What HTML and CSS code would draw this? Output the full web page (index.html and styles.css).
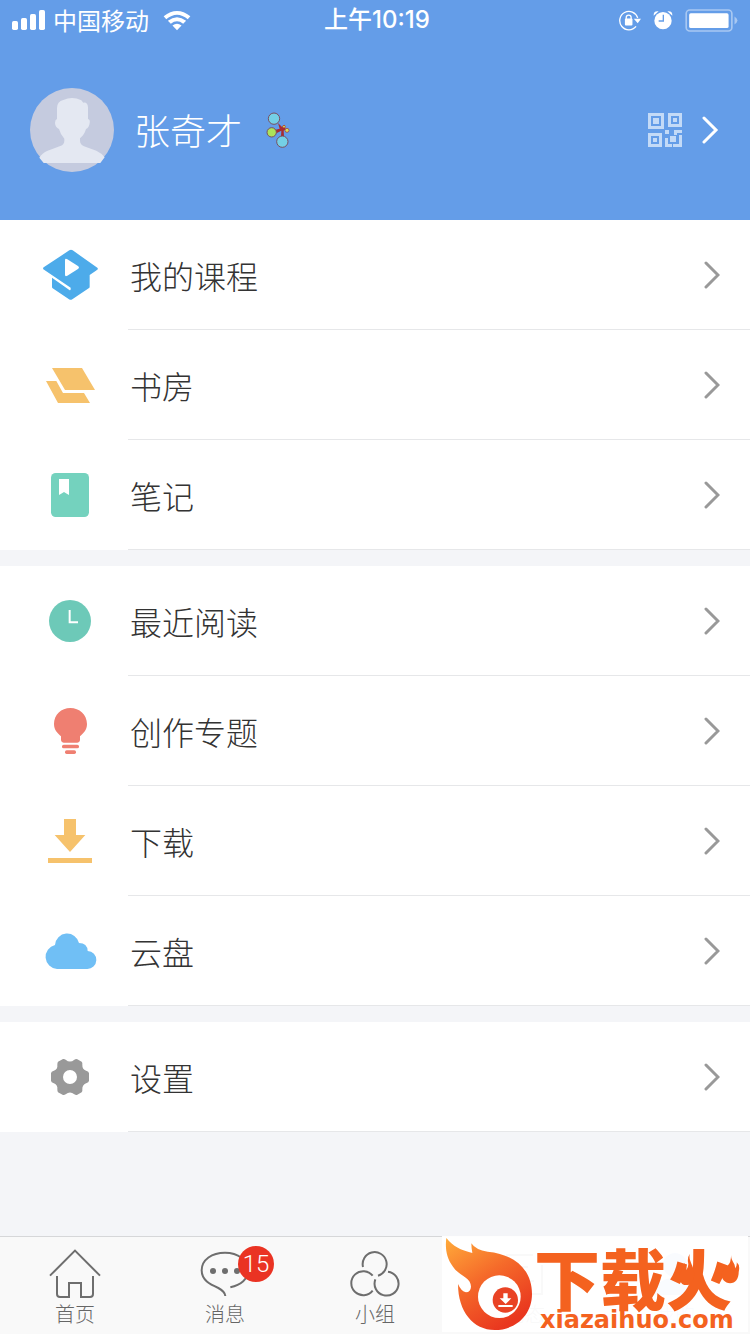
FILE: index.html
```html
<!DOCTYPE html>
<html lang="zh-CN">
<head>
<meta charset="utf-8">
<meta name="viewport" content="width=device-width, initial-scale=1">
<title>张奇才</title>
<link rel="stylesheet" href="styles.css">
</head>
<body>
<header class="header">
  <div class="status">
    <div class="status-left">
      <svg class="signal" viewBox="36 30 99 60" aria-hidden="true"><rect x="36" y="63" width="18" height="27" rx="5"/><rect x="63" y="54" width="18" height="36" rx="5"/><rect x="90" y="42" width="18" height="48" rx="5"/><rect x="117" y="30" width="18" height="60" rx="5"/></svg>
      <span>中国移动</span>
      <svg class="wifi" viewBox="488 28 86 64" aria-hidden="true"><path d="M490 47Q531 14 572 47L564 56Q531 28 498 56Z"/><path d="M503 61Q531 39 559 61L550 70Q531 55 512 70Z"/><path d="M517 75Q531 65 545 75L531 90Z"/></svg>
    </div>
    <time class="time">上午10:19</time>
    <div class="status-right">
      <svg class="lock" viewBox="55 28 70 64" aria-hidden="true"><path d="M110 78A28 28 0 1 1 115 52" fill="none" stroke="#fff" stroke-width="4"/><path d="M103 55h22l-10 13z"/><rect x="76" y="54" width="23" height="21" rx="3"/><path d="M80 56v-5a7.500 7.500 0 0 1 15 0v5" fill="none" stroke="#fff" stroke-width="4"/></svg>
      <svg class="alarm" viewBox="163 30 60 60" aria-hidden="true"><circle cx="193" cy="62" r="26"/><path d="M165 47q-1-15 15-13zM221 47q1-15-15-13z"/><path d="M194 44v19h-14" fill="none" stroke="#649de8" stroke-width="4"/></svg>
      <svg class="battery" viewBox="258 26 160 70" aria-hidden="true"><rect x="261" y="29" width="139" height="64" rx="11" fill="none" stroke="#a8c8f2" stroke-width="5"/><rect x="270" y="39" width="120" height="45" rx="5"/><path d="M408 49q18 12 0 24z" fill="#a8c8f2"/></svg>
    </div>
  </div>
  <a class="profile" href="#profile">
    <svg class="avatar" viewBox="30 24 252 252" aria-hidden="true"><circle cx="156" cy="150" r="126" fill="#c5cbdf"/><path d="M58 233Q66 219 83 212L121 198Q133 193 133 182V176Q122 165 117 147Q106 143 105 129Q105 119 111 117V84Q111 65 130 60Q157 47 184 61L190 68Q203 66 204 82V117Q211 119 209 129Q207 144 198 147Q193 165 180 175V182Q180 193 192 199L229 212Q246 220 254 232L241 249H71Z" fill="#e4e8f2"/></svg>
    <span class="name">张奇才</span>
    <svg class="medal" viewBox="738 96 72 114" aria-hidden="true"><path d="M774 132L786 144 793 137 797 151 791 155 792 172H783L784 155 766 164 764 153 779 149Z" fill="#a92b31"/><g stroke="#79505f" stroke-width="3"><circle cx="762" cy="119" r="17" fill="#74d0e6"/><circle cx="755" cy="160" r="14" fill="#ace35a"/><circle cx="787" cy="188" r="17" fill="#74d0e6"/></g><g fill="#d4e45a" stroke="#a92b31" stroke-width="2"><circle cx="801" cy="154" r="6"/><circle cx="792" cy="143" r="4"/></g></svg>
    <svg class="qr" viewBox="54 54 102 102" aria-hidden="true"><g fill="none" stroke="#c3daf7" stroke-width="9"><path d="M58.500 58.500h39v39h-39zM118.500 58.500h33v33h-33zM58.500 118.500h33v33h-33z"/></g><path fill="#c3daf7" d="M69 69h18v18H69zM129 69h12v12h-12zM69 129h12v12H69zM105 105h12v12h-12zM132 105h24v9h-15v6h-9zM120 123h18v18h-18zM105 129h9v18h12v9h-21zM147 120h9v36h-27v-9h18z"/></svg>
    <svg class="chevron chevron-light" viewBox="0 0 18 30" aria-hidden="true"><path d="M2 3L14 15 2 27"/></svg>
  </a>
</header>

<main class="menu">
  <section class="group">
    <a class="row" href="#courses">
      <svg class="icon" viewBox="36 36 168 168" aria-hidden="true"><path d="M118 46Q123 43 128 46L202 98Q205 101 202 104L179 120V155Q179 158 176 160L127 193Q122 196 117 193L68 160Q66 158 66 155V128L118 165Q122 167 122 162V158L40 103Q38 100 41 97Z" fill="#4dabea"/><path d="M105 76Q105 69 112 73L145 94Q149 98 145 101L112 122Q105 126 105 119Z" fill="#fff"/></svg>
      <span class="label">我的课程<svg class="chevron" viewBox="0 0 18 30" aria-hidden="true"><path d="M4 3L16 15 4 27"/></svg></span>
    </a>
    <a class="row" href="#library">
      <svg class="icon" viewBox="36 366 168 168" aria-hidden="true"><path d="M66 399H156L195 465H105ZM48 438H79L99 474H162L180 504H84Z" fill="#f6c26c"/></svg>
      <span class="label">书房<svg class="chevron" viewBox="0 0 18 30" aria-hidden="true"><path d="M4 3L16 15 4 27"/></svg></span>
    </a>
    <a class="row" href="#notes">
      <svg class="icon" viewBox="36 21 168 168" aria-hidden="true"><rect x="63" y="39" width="114" height="132" rx="14" fill="#74d2be"/><path d="M87 57h30v48q-8-5-15-9-7 4-15 9z" fill="#fff"/></svg>
      <span class="label">笔记<svg class="chevron" viewBox="0 0 18 30" aria-hidden="true"><path d="M4 3L16 15 4 27"/></svg></span>
    </a>
  </section>
  <section class="group">
    <a class="row" href="#recent">
      <svg class="icon" viewBox="36 399 168 168" aria-hidden="true"><circle cx="120" cy="483" r="63" fill="#6dc9b8"/><path d="M119 450v37h25" fill="none" stroke="#fff" stroke-width="6"/></svg>
      <span class="label">最近阅读<svg class="chevron" viewBox="0 0 18 30" aria-hidden="true"><path d="M4 3L16 15 4 27"/></svg></span>
    </a>
    <a class="row" href="#topics">
      <svg class="icon" viewBox="36 24 168 168" aria-hidden="true"><g fill="#ef7f71"><path d="M93 136V124C84 115 72 106 72 87C72 59 94 39 121 39S171 59 171 87C171 106 159 115 150 124V136Q149 143 142 143H101Q94 143 93 136Z"/><rect x="96" y="149" width="51" height="11" rx="5"/><rect x="105" y="166" width="33" height="11" rx="5"/></g></svg>
      <span class="label">创作专题<svg class="chevron" viewBox="0 0 18 30" aria-hidden="true"><path d="M4 3L16 15 4 27"/></svg></span>
    </a>
    <a class="row" href="#downloads">
      <svg class="icon" viewBox="36 354 168 168" aria-hidden="true"><path d="M102 372H138V420H166L120 471 74 420H102ZM54 489H186V504H54Z" fill="#f6c26c"/></svg>
      <span class="label">下载<svg class="chevron" viewBox="0 0 18 30" aria-hidden="true"><path d="M4 3L16 15 4 27"/></svg></span>
    </a>
    <a class="row" href="#cloud">
      <svg class="icon" viewBox="36 9 168 168" aria-hidden="true"><path d="M81 147A36.500 36.500 0 0 1 75 75A36.500 36.500 0 0 1 147 69Q172 69 173 93A27 27 0 0 1 171 147Z" fill="#70bff5"/></svg>
      <span class="label">云盘<svg class="chevron" viewBox="0 0 18 30" aria-hidden="true"><path d="M4 3L16 15 4 27"/></svg></span>
    </a>
  </section>
  <section class="group">
    <a class="row" href="#settings">
      <svg class="icon" viewBox="36 387 168 168" aria-hidden="true"><path fill="#999" fill-rule="evenodd" d="M99 417Q103 416 107 419Q120 430 133 419Q138 416 142 418L155 425Q158 428 157 434Q156 448 170 453Q176 454 177 460V482Q176 488 170 489Q156 494 157 508Q158 514 155 517L142 524Q138 526 133 523Q120 512 107 523Q103 526 99 525L84 517Q82 514 82 508Q84 494 70 489Q64 488 63 482V460Q64 454 70 453Q84 448 82 434Q82 428 84 425ZM120 450A21 21 0 1 0 120 492A21 21 0 1 0 120 450Z"/></svg>
      <span class="label">设置<svg class="chevron" viewBox="0 0 18 30" aria-hidden="true"><path d="M4 3L16 15 4 27"/></svg></span>
    </a>
  </section>
</main>

<nav class="tabs">
  <a class="tab" href="#home">
    <svg class="tab-icon" viewBox="147 72 156 156" aria-hidden="true"><path d="M150 152L225 77 300 152M171 153V207Q171 216 180 216H207V174H243V216H270Q279 216 279 207V153"/></svg>
    <span>首页</span>
  </a>
  <a class="tab" href="#messages">
    <span class="tab-mark">
      <svg class="tab-icon" viewBox="597 72 156 156" aria-hidden="true"><path d="M676 213Q675 200 655 189C630 178 605 166 605 136C605 104 636 83 675 83S745 106 745 136C745 162 722 180 691 187"/><g class="dots"><circle cx="639" cy="138" r="9"/><circle cx="675" cy="138" r="9"/><circle cx="711" cy="138" r="9"/></g></svg>
      <span class="count">15</span>
    </span>
    <span>消息</span>
  </a>
  <a class="tab" href="#groups">
    <svg class="tab-icon" viewBox="1047 72 156 156" aria-hidden="true"><path d="M1089 126A36 36 0 1 1 1134 152M1118 152A36 36 0 1 0 1118 197M1126 163A36 36 0 1 0 1164 140"/></svg>
    <span>小组</span>
  </a>
  <a class="tab" href="#moments">
    <svg class="tab-icon" viewBox="0 0 52 52" aria-hidden="true"><path d="M34 6H8V45H43V16M17 18h12M17 32h18" stroke-width="2"/></svg>
    <span>动态</span>
  </a>
  <a class="tab tab-current" href="#me">
    <svg class="tab-icon" viewBox="0 0 52 52" aria-hidden="true"><circle cx="26" cy="16" r="12"/><path d="M5 46Q6 29 26 29T47 46Z"/></svg>
    <span>我的</span>
  </a>
  <div class="brand">
    <svg class="flame" viewBox="36 33 276 288" aria-hidden="true">
      <defs><linearGradient id="fire" x1="0" y1="0" x2="0.600" y2="1"><stop offset="0" stop-color="#ffab3a"/><stop offset="0.500" stop-color="#f56a2a"/><stop offset="1" stop-color="#e9371f"/></linearGradient></defs>
      <path fill="url(#fire)" d="M49 39C70 65 91 75 127 84Q124 68 124 55Q137 75 173 80C258 88 306 137 306 207C306 270 258 315 194 315C130 315 84 260 84 177Q94 200 108 202Q122 201 123 185C123 157 88 154 69 125C49 98 45 69 49 39Z"/>
      <circle cx="208" cy="215" r="64" fill="#fff"/>
      <circle cx="226" cy="225" r="38" fill="#e94325"/>
      <path fill="#fff" d="M220 205h13v15h11l-17 17-18-17h11zM205 240h43v6h-43z"/>
    </svg>
    <div class="brand-text">
      <strong class="brand-name">下载火</strong>
      <span class="brand-site">xiazaihuo.com</span>
    </div>
    <svg class="sparks" viewBox="745 80 195 100" aria-hidden="true"><path d="M780 85C774 108 794 122 793 149C792 170 780 182 767 181C753 180 745 162 751 144C755 134 763 127 762 113Q772 119 769 135Q778 124 774 109Q773 94 780 85ZM905 86C903 108 918 112 917 130Q923 124 922 111Q933 120 928 140C928 162 918 175 902 175C885 174 875 160 876 147C878 129 896 125 902 110Q905 99 905 86Z"/></svg>
  </div>
</nav>
</body>
</html>
```
FILE: styles.css
```css
* {
  box-sizing: border-box;
}

body {
  margin: 0;
  min-height: 100vh;
  display: flex;
  flex-direction: column;
  background: #f4f5f8;
  color: #333;
  font-family: "Noto Sans CJK SC", sans-serif;
  font-weight: 300;
}

a {
  color: inherit;
  text-decoration: none;
}

svg {
  display: block;
  flex: none;
}

.header {
  background: #649de8;
  color: #fff;
}

.status {
  display: grid;
  grid-template-columns: 1fr auto 1fr;
  align-items: center;
  height: 40px;
  padding: 0 12px;
  font-size: 24px;
  line-height: 40px;
  fill: #fff;
}

.status-left,
.status-right {
  display: flex;
  align-items: center;
}

.status-left {
  gap: 8px;
  font-weight: 400;
}

.status-right {
  justify-content: flex-end;
  gap: 12px;
}

.signal {
  width: 33px;
  height: 20px;
}

.wifi {
  width: 28px;
  height: 21px;
  margin-left: 6px;
}

.time {
  padding-left: 4px;
  font-family: Inter, "Noto Sans CJK SC", sans-serif;
  font-weight: 500;
}

.lock {
  width: 23px;
  height: 21px;
}

.alarm {
  width: 20px;
  height: 20px;
}

.battery {
  width: 53px;
  height: 23px;
}

.profile {
  display: flex;
  align-items: center;
  height: 180px;
  padding: 0 30px;
}

.avatar {
  width: 84px;
  height: 84px;
}

.name {
  margin: 0 24px 0 20px;
  padding-bottom: 2px;
  font-size: 36px;
}

.medal {
  width: 24px;
  height: 38px;
}

.qr {
  width: 34px;
  height: 34px;
  margin: 0 20px 0 auto;
}

.chevron {
  width: 18px;
  height: 30px;
  fill: none;
  stroke: #999;
  stroke-width: 3;
  stroke-linecap: round;
}

.chevron-light {
  stroke: #fff;
}

.menu {
  flex: 1;
  display: flex;
  flex-direction: column;
  gap: 16px;
}

.group {
  background: #fff;
}

.row {
  display: flex;
  align-items: center;
  gap: 30px;
  height: 110px;
  padding-left: 42px;
}

.icon {
  width: 56px;
  height: 56px;
}

.label {
  flex: 1;
  display: flex;
  align-items: center;
  justify-content: space-between;
  height: 110px;
  padding: 0 30px 0 2px;
  border-bottom: 1px solid #e6e7e9;
  font-size: 32px;
}

.tabs {
  position: relative;
  display: flex;
  border-top: 1px solid #d6d7d9;
  background: #f9f9f9;
}

.tab {
  flex: 1;
  display: flex;
  flex-direction: column;
  align-items: center;
  gap: 1px;
  padding: 12px 0 8px;
  color: #666;
  font-size: 20px;
  line-height: 24px;
}

.tab-icon {
  width: 52px;
  height: 52px;
  fill: none;
  stroke: #6e6e6e;
  stroke-width: 6;
}

.tab-current {
  color: #649de8;
}

.tab-current .tab-icon {
  fill: #649de8;
  stroke: none;
}

.dots {
  fill: #6e6e6e;
  stroke: none;
}

.tab-mark {
  position: relative;
}

.count {
  position: absolute;
  top: -3px;
  left: 39px;
  width: 36px;
  height: 36px;
  border-radius: 50%;
  background: #ea3323;
  color: #fff;
  font-family: Roboto, sans-serif;
  font-size: 24px;
  line-height: 36px;
  text-align: center;
}

.brand {
  position: absolute;
  top: -1px;
  right: 2px;
  display: flex;
  width: 306px;
  height: 96px;
  background: rgba(255, 255, 255, 0.96);
  color: #f4621f;
}

.flame {
  width: 92px;
  height: 96px;
}

.brand-text {
  display: flex;
  flex-direction: column;
  align-items: flex-start;
  padding-top: 12px;
}

.brand-name {
  font-size: 66px;
  font-weight: 900;
  line-height: 56px;
}

.brand-site {
  padding: 4px 0 0 6px;
  font-family: "DejaVu Sans", sans-serif;
  font-size: 24px;
  font-weight: 700;
  line-height: 24px;
}

.sparks {
  position: absolute;
  top: 16px;
  right: 5px;
  width: 65px;
  height: 33px;
  fill: #f4621f;
}
```
